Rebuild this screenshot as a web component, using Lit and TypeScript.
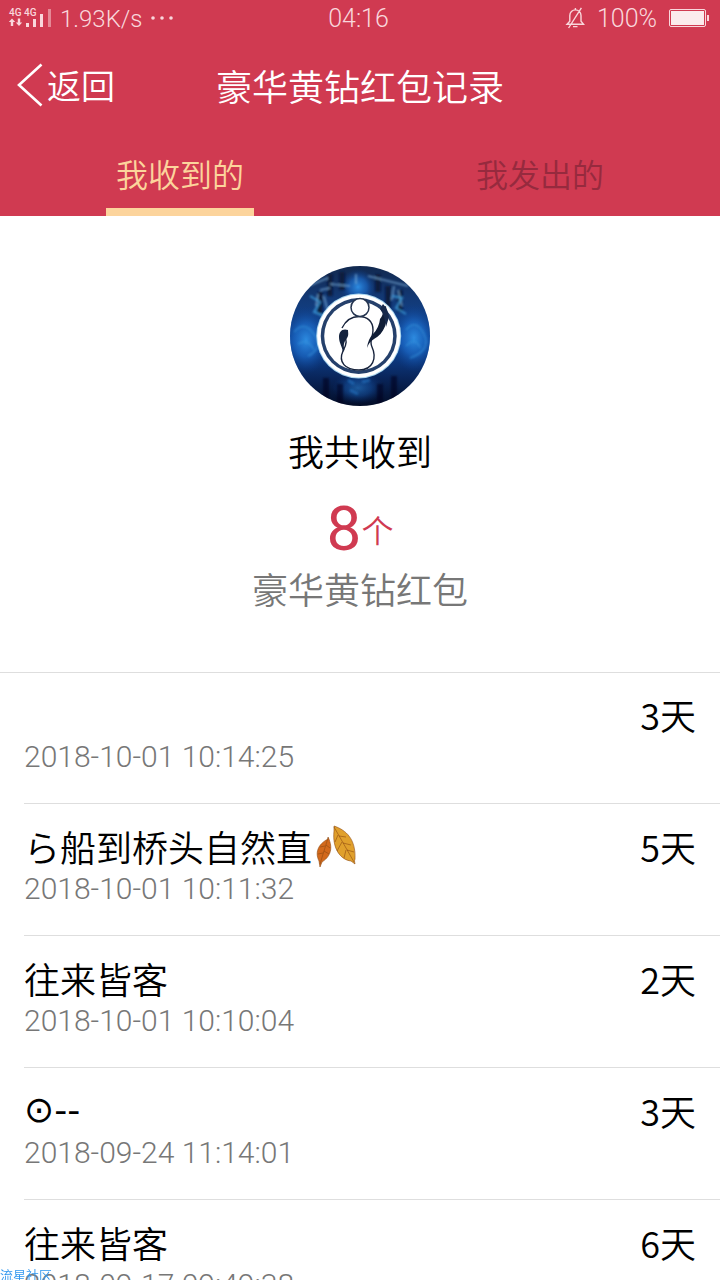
import { LitElement, html, css, svg, nothing } from "lit";
import { customElement, property, state } from "lit/decorators.js";

interface PacketRecord {
  name: string;
  symbols?: boolean;
  leaf?: boolean;
  time: string;
  days: number;
}

const RECORDS: PacketRecord[] = [
  { name: "", time: "2018-10-01 10:14:25", days: 3 },
  { name: "ら船到桥头自然直", leaf: true, time: "2018-10-01 10:11:32", days: 5 },
  { name: "往来皆客", time: "2018-10-01 10:10:04", days: 2 },
  { name: "⊙--", symbols: true, time: "2018-09-24 11:14:01", days: 3 },
  { name: "往来皆客", time: "2018-09-17 09:49:38", days: 6 },
];

@customElement("status-bar")
class StatusBar extends LitElement {
  static styles = css`
    :host {
      display: grid;
      grid-template-columns: 1fr auto 1fr;
      align-items: center;
      height: 36px;
      padding: 0 11px 0 8px;
      color: #f9d7dc;
      font-family: Roboto, sans-serif;
      font-size: 25px;
      line-height: 34px;
    }
    .side {
      display: flex;
      align-items: center;
      gap: 8px;
    }
    .left {
      font-size: 24px;
    }
    .right {
      justify-content: flex-end;
      gap: 12px;
    }
    span {
      padding-top: 2px;
    }
    svg {
      display: block;
      flex: none;
    }
    .net {
      font: 500 10px "Roboto", sans-serif;
    }
  `;

  render() {
    return html`
      <div class="side left">
        <svg width="44" height="20" viewBox="0 0 44 20" fill="#f9d7dc" aria-hidden="true">
          <text class="net" x="1" y="8">4G</text>
          <text class="net" x="16" y="8">4G</text>
          <path d="M4 10.5 7.2 14H5.2V18H2.8V14H.8ZM11 18 7.8 14.5H9.8V10.5H12.2V14.5H14.2Z" />
          <path d="M18 15h3v4h-3zM25 11h3v8h-3zM32 6h3v13h-3z" />
          <path d="M40 1h3v18h-3z" opacity=".5" />
        </svg>
        <span>1.93K/s</span>
        <svg width="24" height="4" viewBox="0 0 24 4" fill="#f9d7dc" aria-hidden="true">
          <circle cx="2" cy="2" r="1.8" /><circle cx="11" cy="2" r="1.8" /><circle cx="20" cy="2" r="1.8" />
        </svg>
      </div>
      <span>04:16</span>
      <div class="side right">
        <svg width="20" height="22" viewBox="0 0 20 22" fill="none" stroke="#f9d7dc" stroke-width="1.4" aria-hidden="true">
          <path d="M2 17.3H18.6L16 14.2V8.5A5.6 5.6 0 0 0 4.8 8.5V14.2ZM10.4 3V1M8 19.6H12.5M16.4.8 3.6 21" />
        </svg>
        <span>100%</span>
        <svg width="40" height="18" viewBox="0 0 40 18" aria-hidden="true">
          <rect x=".5" y=".5" width="36" height="17" rx="1.5" fill="none" stroke="#f9d7dc" />
          <rect x="2" y="2" width="33" height="14" fill="#fbebed" />
          <path d="M38 6h2v6h-2z" fill="#f9d7dc" />
        </svg>
      </div>
    `;
  }
}

@customElement("team-avatar")
class TeamAvatar extends LitElement {
  static styles = css`
    :host {
      display: block;
    }
    svg {
      display: block;
    }
  `;

  render() {
    return html`
      <svg width="140" height="140" viewBox="0 0 140 140" role="img" aria-label="头像">
        <defs>
          <clipPath id="disc"><circle cx="70" cy="70" r="70" /></clipPath>
          <linearGradient id="sky" x1="0" y1="0" x2="0" y2="1">
            <stop offset="0" stop-color="#12294f" />
            <stop offset=".25" stop-color="#123a78" />
            <stop offset=".55" stop-color="#0f499c" />
            <stop offset=".8" stop-color="#09255a" />
            <stop offset="1" stop-color="#030d27" />
          </linearGradient>
          <radialGradient id="glow">
            <stop offset="0" stop-color="#2d8be0" />
            <stop offset=".5" stop-color="#1b67c4" stop-opacity=".7" />
            <stop offset="1" stop-color="#0b3b8c" stop-opacity="0" />
          </radialGradient>
          <filter id="soft" x="-20%" y="-20%" width="140%" height="140%"><feGaussianBlur stdDeviation="1.1" /></filter>
        </defs>
        <g clip-path="url(#disc)">
          <rect width="140" height="140" fill="url(#sky)" />
          <ellipse cx="16" cy="74" rx="24" ry="34" fill="url(#glow)" />
          <ellipse cx="124" cy="72" rx="24" ry="34" fill="url(#glow)" />
          <ellipse cx="68" cy="21" rx="18" ry="18" fill="url(#glow)" />
          <ellipse cx="68" cy="122" rx="26" ry="16" fill="url(#glow)" opacity=".55" />
          <g filter="url(#soft)" fill="none">
            <path d="M40 8V30M52 6V24M88 8V26M98 20V42M30 26V48M110 24V46" stroke="#081a3c" stroke-width="5" />
            <path d="M18 20 38 12M40 18 60 20M66 8V18M78 10 118 20M30 24 40 22M28 28 26 40M34 30 38 46M104 20 102 34M108 24 112 40" stroke="#7fb2dd" stroke-width="1.6" opacity=".75" />
            <path d="M20 30 30 36 24 46 34 50M102 30 112 32 106 42 116 48" stroke="#3fa0e0" stroke-width="2" opacity=".8" />
            <path d="M4 66Q14 54 24 68T18 90M8 78Q18 72 24 84M116 64Q126 52 134 68T120 92M116 80Q126 70 130 82" stroke="#3796de" stroke-width="1.5" opacity=".6" />
            <path d="M36 112V140M50 118V140M90 118V140M104 110V140" stroke="#020a20" stroke-width="6" opacity=".6" />
            <path d="M58 114 64 118M72 116 80 114M60 124 68 128" stroke="#2476c4" stroke-width="3" opacity=".6" />
          </g>
          <circle cx="68.7" cy="70" r="42.5" fill="#a9d5ee" />
          <circle cx="68.7" cy="70" r="41.5" fill="#fff" />
          <circle cx="68.7" cy="70" r="38" fill="#25406b" />
          <circle cx="68.7" cy="70" r="34.5" fill="#fff" />
          <path d="M52 62C56 54 61 50.500 69 50.500S83 55 83 64C83 72 79 75 82 81C87 92 83 104 69 104S48 96 53 85C57 78 57 74 54 68" fill="#fff" stroke="#17233c" stroke-width="1.4" />
          <circle cx="70" cy="41.5" r="9" fill="#fff" stroke="#24344f" stroke-width="1.5" />
          <path d="M58 64C52 62 49 66 49 71C49 77 52 80 53 86L54.500 84C53 79 54 76 57 72C59 69 58 67 58 64Z" fill="#14233e" />
          <path d="M96 40C99 56 94 68 84 73Q79 76 77 82Q78 73 83 68Q89 62 90 53Q93 50 94 41Z" fill="#101d36" />
          <path d="M93 38Q98 43 99 51L96 61Q95 50 90 43Z" fill="#17294b" />
        </g>
      </svg>
    `;
  }
}

const leafIcon = svg`
  <g stroke="#8f4a10" stroke-width=".6">
    <path d="M18 1C30 5 40 14 39 34C38 36 39 38 39 39L35 36C25 35 16 24 18 6Z" fill="#e0a02c" />
    <path d="M12 12C16 20 17 30 6 37L4 42L3 36C-2 26 4 18 12 14Z" fill="#d2691c" />
    <path d="M18 2C25 14 31 25 38 37M23 11 30 12M27 18 35 20M31 25 38 27M22 10 19 17M26 17 21 26M30 25 28 33M12 13 4 39M10 20 14 23M8 26 13 29M9 21 4 22M7 28 2 29" fill="none" stroke-width=".6" />
  </g>
`;

@customElement("record-row")
class RecordRow extends LitElement {
  @property({ attribute: false }) record!: PacketRecord;

  static styles = css`
    :host {
      display: grid;
      grid-template-columns: 1fr auto;
      grid-template-rows: 48px 34px;
      box-sizing: border-box;
      height: 132px;
      margin-left: 24px;
      padding: 18px 24px 0 0;
      border-bottom: 1px solid #dedede;
    }
    .name,
    .days {
      font-size: 36px;
      line-height: 48px;
      color: #000;
    }
    .name {
      display: flex;
      align-items: center;
      gap: 4px;
    }
    .symbols {
      font-family: "DejaVu Sans", sans-serif;
      font-weight: 400;
    }
    .leaf {
      display: block;
    }
    .time {
      grid-column: 1 / -1;
      font-family: Roboto, sans-serif;
      font-size: 30px;
      line-height: 38px;
      color: #777;
    }
  `;

  render() {
    const { name, symbols, leaf, time, days } = this.record;
    return html`
      <div class="name">
        <span class=${symbols ? "symbols" : nothing}>${name}</span>
        ${leaf
          ? html`<svg class="leaf" width="40" height="43" viewBox="0 0 40 43" role="img" aria-label="落叶">${leafIcon}</svg>`
          : nothing}
      </div>
      <div class="days">${days}天</div>
      <time class="time">${time}</time>
    `;
  }
}

@customElement("app-root")
class AppRoot extends LitElement {
  @state() private tab = 0;

  static styles = css`
    :host {
      display: flex;
      flex-direction: column;
      height: 100vh;
      overflow: hidden;
      background: #fff;
      color: #000;
      font-family: "Noto Sans CJK SC", sans-serif;
      font-weight: 350;
    }
    .head {
      flex: none;
      background: #d03a51;
      color: #fff;
    }
    button {
      border: 0;
      margin: 0;
      padding: 0;
      background: none;
      font: inherit;
      color: inherit;
      cursor: pointer;
    }
    .nav {
      display: grid;
      grid-template-columns: 1fr auto 1fr;
      align-items: center;
      box-sizing: border-box;
      height: 100px;
      padding: 0 16px 2px;
    }
    .back {
      display: flex;
      align-items: center;
      justify-self: start;
      gap: 4px;
      font-size: 34px;
      line-height: 48px;
    }
    .title {
      margin: 0;
      font-size: 36px;
      line-height: 48px;
      font-weight: inherit;
    }
    .tabs {
      display: grid;
      grid-template-columns: 1fr 1fr;
      justify-items: center;
      height: 80px;
    }
    .tab {
      box-sizing: border-box;
      width: 148px;
      padding-bottom: 6px;
      border-block: 8px solid transparent;
      font-size: 32px;
      line-height: 48px;
      color: #962a3e;
    }
    .tab[aria-selected="true"] {
      color: #fcd49c;
      border-bottom-color: #fcd49c;
    }
    .body {
      flex: 1;
      min-height: 0;
      overflow-y: auto;
      scrollbar-width: none;
    }
    .summary {
      display: flex;
      flex-direction: column;
      align-items: center;
      padding: 50px 0 60px;
      font-size: 36px;
      line-height: 48px;
    }
    .caption {
      margin: 20px 0 0;
    }
    .count {
      display: flex;
      align-items: center;
      margin: 20px 0 0;
      font-family: Roboto, sans-serif;
      font-size: 62px;
      font-weight: 400;
      line-height: 70px;
      color: #d03a51;
    }
    .unit {
      font-family: "Noto Sans CJK SC", sans-serif;
      font-size: 32px;
      font-weight: 350;
    }
    .kind {
      margin: 0;
      color: #777;
    }
    .list {
      margin: 0;
      padding: 0;
      list-style: none;
      box-shadow: inset 0 1px #dedede;
    }
    .mark {
      position: fixed;
      left: 0;
      bottom: -4px;
      font-size: 13px;
      line-height: 18px;
      color: #2f96ee;
    }
  `;

  private renderTab(label: string, index: number) {
    return html`<button
      class="tab"
      role="tab"
      aria-selected=${this.tab === index ? "true" : "false"}
      @click=${() => (this.tab = index)}
    >${label}</button>`;
  }

  render() {
    return html`
      <header class="head">
        <status-bar></status-bar>
        <div class="nav">
          <button class="back">
            <svg width="27" height="44" viewBox="0 0 27 44" fill="none" stroke="#fff" stroke-width="2.6" aria-hidden="true">
              <path d="M25.5 1.500 3 22 25.5 42.500" />
            </svg>
            <span>返回</span>
          </button>
          <h1 class="title">豪华黄钻红包记录</h1>
        </div>
        <div class="tabs" role="tablist">
          ${this.renderTab("我收到的", 0)}${this.renderTab("我发出的", 1)}
        </div>
      </header>
      <main class="body">
        <section class="summary">
          <team-avatar></team-avatar>
          <p class="caption">我共收到</p>
          <p class="count">8<span class="unit">个</span></p>
          <p class="kind">豪华黄钻红包</p>
        </section>
        <ul class="list">
          ${RECORDS.map((r) => html`<li><record-row .record=${r}></record-row></li>`)}
        </ul>
      </main>
      <div class="mark">流星社区</div>
    `;
  }
}
